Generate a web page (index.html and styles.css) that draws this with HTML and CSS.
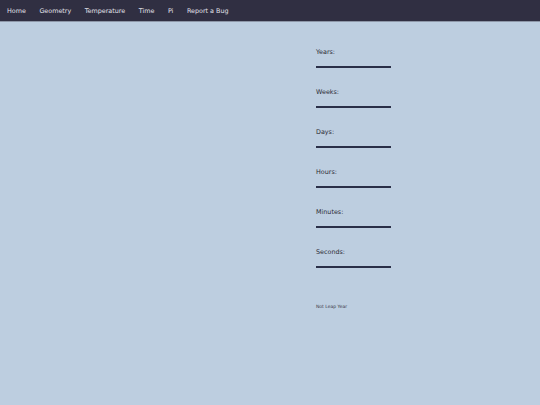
FILE: index.html
```html
<!DOCTYPE html>
<html>

<head>
    <title>Time Converter</title>
    <link rel="stylesheet" href="styles.css">
</head>

<body>
    <nav class="navbar">
        <a href="#">Home</a>
        <a href="#">Geometry</a>
        <a href="#">Temperature</a>
        <a href="#">Time</a>
        <a href="#">Pi</a>
        <a href="#">Report a Bug</a>
    </nav>

    <div class="page">
        <div class="left-side"></div>

        <div class="converter">
            <div class="field">
                <label>Years:</label>
                <input type="text" id="years">
            </div>
            <div class="field">
                <label>Weeks:</label>
                <input type="text" id="weeks">
            </div>
            <div class="field">
                <label>Days:</label>
                <input type="text" id="days">
            </div>
            <div class="field">
                <label>Hours:</label>
                <input type="text" id="hours">
            </div>
            <div class="field">
                <label>Minutes:</label>
                <input type="text" id="minutes">
            </div>
            <div class="field">
                <label>Seconds:</label>
                <input type="text" id="seconds">
            </div>

            <p class="leap">Not Leap Year</p>
        </div>
    </div>
</body>

</html>
```

FILE: styles.css
```css
body {
    font-family: 'DejaVu Sans', Verdana, sans-serif;
    background: #bdcee0;
    margin: 0;
    min-height: 405px;
}

.navbar {
    display: flex;
    gap: 13.5px;
    align-items: center;
    height: 21px;
    padding: 0 7px;
    background: #302f42;
    border-bottom: 1px solid #8e97a8;
}

.navbar a,
.navbar a:visited {
    color: #e2e2ea;
    font-size: 6.4px;
    text-decoration: none;
}

.page {
    display: grid;
    grid-template-columns: 316px 1fr;
}

.converter {
    padding-top: 25px;
}

.field {
    display: flex;
    flex-direction: column;
    height: 40px;
}

.field label {
    color: #2c2c35;
    font-size: 6.4px;
    line-height: 10px;
}

.field input {
    width: 75px;
    height: 9px;
    margin: 0;
    padding: 0;
    background: transparent;
    border: none;
    border-bottom: 2px solid #2a2f48;
    outline: none;
}

.leap {
    margin: 17px 0 0;
    color: #3a3a45;
    font-size: 4.5px;
}
```
